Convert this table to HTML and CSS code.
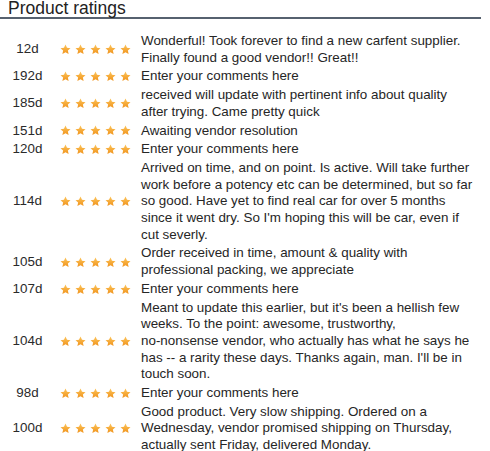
FILE: index.html
```html
<!DOCTYPE html>
<html>
<head>
<meta charset="utf-8">
<link rel="stylesheet" href="styles.css">
</head>
<body>
<svg class="defs" width="0" height="0" aria-hidden="true">
  <defs>
    <linearGradient id="sg" x1="0" y1="0" x2="0" y2="1">
      <stop offset="0" stop-color="#fcc45a"/>
      <stop offset="1" stop-color="#f0931c"/>
    </linearGradient>
    <symbol id="star" viewBox="0 0 24 24">
      <path d="M12 1.2l3.3 7.1 7.6.8-5.7 5.2 1.6 7.6L12 18l-6.8 3.9 1.6-7.6L1.1 9.1l7.6-.8z" fill="url(#sg)"/>
    </symbol>
  </defs>
</svg>
<div class="panel">
  <h2 class="title">Product ratings</h2>
  <div class="list">
    <div class="row"><div class="age">12d</div><div class="stars"><svg viewBox="0 0 71 11"><use href="#star" x="0" width="11" height="11"/><use href="#star" x="15" width="11" height="11"/><use href="#star" x="30" width="11" height="11"/><use href="#star" x="45" width="11" height="11"/><use href="#star" x="60" width="11" height="11"/></svg></div><div class="text">Wonderful! Took forever to find a new carfent supplier.<br>Finally found a good vendor!! Great!!</div></div>
    <div class="row"><div class="age">192d</div><div class="stars"><svg viewBox="0 0 71 11"><use href="#star" x="0" width="11" height="11"/><use href="#star" x="15" width="11" height="11"/><use href="#star" x="30" width="11" height="11"/><use href="#star" x="45" width="11" height="11"/><use href="#star" x="60" width="11" height="11"/></svg></div><div class="text">Enter your comments here</div></div>
    <div class="row"><div class="age">185d</div><div class="stars"><svg viewBox="0 0 71 11"><use href="#star" x="0" width="11" height="11"/><use href="#star" x="15" width="11" height="11"/><use href="#star" x="30" width="11" height="11"/><use href="#star" x="45" width="11" height="11"/><use href="#star" x="60" width="11" height="11"/></svg></div><div class="text">received will update with pertinent info about quality<br>after trying. Came pretty quick</div></div>
    <div class="row"><div class="age">151d</div><div class="stars"><svg viewBox="0 0 71 11"><use href="#star" x="0" width="11" height="11"/><use href="#star" x="15" width="11" height="11"/><use href="#star" x="30" width="11" height="11"/><use href="#star" x="45" width="11" height="11"/><use href="#star" x="60" width="11" height="11"/></svg></div><div class="text">Awaiting vendor resolution</div></div>
    <div class="row"><div class="age">120d</div><div class="stars"><svg viewBox="0 0 71 11"><use href="#star" x="0" width="11" height="11"/><use href="#star" x="15" width="11" height="11"/><use href="#star" x="30" width="11" height="11"/><use href="#star" x="45" width="11" height="11"/><use href="#star" x="60" width="11" height="11"/></svg></div><div class="text">Enter your comments here</div></div>
    <div class="row"><div class="age">114d</div><div class="stars"><svg viewBox="0 0 71 11"><use href="#star" x="0" width="11" height="11"/><use href="#star" x="15" width="11" height="11"/><use href="#star" x="30" width="11" height="11"/><use href="#star" x="45" width="11" height="11"/><use href="#star" x="60" width="11" height="11"/></svg></div><div class="text">Arrived on time, and on point. Is active. Will take further<br>work before a potency etc can be determined, but so far<br>so good. Have yet to find real car for over 5 months<br>since it went dry. So I'm hoping this will be car, even if<br>cut severly.</div></div>
    <div class="row"><div class="age">105d</div><div class="stars"><svg viewBox="0 0 71 11"><use href="#star" x="0" width="11" height="11"/><use href="#star" x="15" width="11" height="11"/><use href="#star" x="30" width="11" height="11"/><use href="#star" x="45" width="11" height="11"/><use href="#star" x="60" width="11" height="11"/></svg></div><div class="text">Order received in time, amount &amp; quality with<br>professional packing, we appreciate</div></div>
    <div class="row"><div class="age">107d</div><div class="stars"><svg viewBox="0 0 71 11"><use href="#star" x="0" width="11" height="11"/><use href="#star" x="15" width="11" height="11"/><use href="#star" x="30" width="11" height="11"/><use href="#star" x="45" width="11" height="11"/><use href="#star" x="60" width="11" height="11"/></svg></div><div class="text">Enter your comments here</div></div>
    <div class="row"><div class="age">104d</div><div class="stars"><svg viewBox="0 0 71 11"><use href="#star" x="0" width="11" height="11"/><use href="#star" x="15" width="11" height="11"/><use href="#star" x="30" width="11" height="11"/><use href="#star" x="45" width="11" height="11"/><use href="#star" x="60" width="11" height="11"/></svg></div><div class="text">Meant to update this earlier, but it's been a hellish few<br>weeks. To the point: awesome, trustworthy,<br>no-nonsense vendor, who actually has what he says he<br>has -- a rarity these days. Thanks again, man. I'll be in<br>touch soon.</div></div>
    <div class="row"><div class="age">98d</div><div class="stars"><svg viewBox="0 0 71 11"><use href="#star" x="0" width="11" height="11"/><use href="#star" x="15" width="11" height="11"/><use href="#star" x="30" width="11" height="11"/><use href="#star" x="45" width="11" height="11"/><use href="#star" x="60" width="11" height="11"/></svg></div><div class="text">Enter your comments here</div></div>
    <div class="row"><div class="age">100d</div><div class="stars"><svg viewBox="0 0 71 11"><use href="#star" x="0" width="11" height="11"/><use href="#star" x="15" width="11" height="11"/><use href="#star" x="30" width="11" height="11"/><use href="#star" x="45" width="11" height="11"/><use href="#star" x="60" width="11" height="11"/></svg></div><div class="text">Good product. Very slow shipping. Ordered on a<br>Wednesday, vendor promised shipping on Thursday,<br>actually sent Friday, delivered Monday.</div></div>
  </div>
</div>
</body>
</html>
```
FILE: styles.css
```css
html, body {
  margin: 0;
  padding: 0;
  background: #ffffff;
}
body {
  font-family: "Liberation Sans", Arial, sans-serif;
  color: #262626;
}
.defs {
  position: absolute;
  width: 0;
  height: 0;
  overflow: hidden;
}
.panel {
  width: 481px;
}
.title {
  margin: 0;
  padding: 0 0 0 8px;
  font-size: 17.5px;
  font-weight: normal;
  line-height: 17px;
  color: #222;
  border-bottom: 2px solid #56616f;
  height: 17px;
}
.list {
  margin-top: 13px;
}
.row {
  display: grid;
  grid-template-columns: 55px 86px 1fr;
  align-items: center;
  padding: 1px 0;
  font-size: 13.4px;
  line-height: 16.7px;
}
.age {
  text-align: center;
  color: #2a2a2a;
}
.stars {
  padding-left: 5px;
  display: flex;
  align-items: center;
}
.stars svg {
  width: 71px;
  height: 11px;
  display: block;
}
.text {
  color: #262626;
  white-space: nowrap;
}
```
